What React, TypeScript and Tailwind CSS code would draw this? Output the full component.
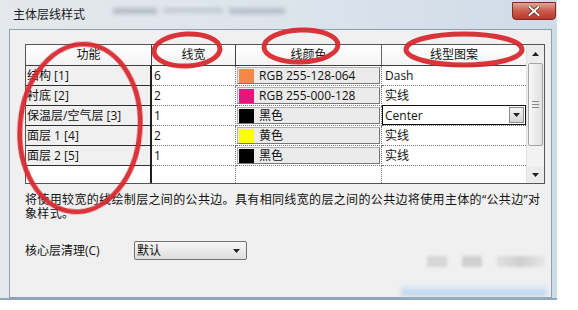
import React from 'react';

const rows = [
  { name: '结构 [1]', w: '6', color: '#f4874a', label: 'RGB 255-128-064', pattern: 'Dash' },
  { name: '衬底 [2]', w: '2', color: '#e6157d', label: 'RGB 255-000-128', pattern: '实线' },
  { name: '保温层/空气层 [3]', w: '1', color: '#000000', label: '黑色', pattern: 'Center', combo: true },
  { name: '面层 1 [4]', w: '2', color: '#ffff00', label: '黄色', pattern: '实线' },
  { name: '面层 2 [5]', w: '1', color: '#000000', label: '黑色', pattern: '实线' },
];

const Tri = ({ down = true }: { down?: boolean }) => (
  <svg width="7" height="4" viewBox="0 0 7 4">
    <path d={down ? 'M0 0 H7 L3.5 4 Z' : 'M0 4 H7 L3.5 0 Z'} fill="#222" />
  </svg>
);

export default function App() {
  return (
    <div className="relative w-[578px] h-[310px] bg-white overflow-hidden text-[12px] text-[#111] font-['Open_Sans','Noto_Sans_CJK_SC',sans-serif]">
      {/* window */}
      <div className="w-[557px] h-[300px] flex flex-col bg-gradient-to-r from-[#e4e8ed] via-[#dde4ec] to-[#cfdbe8] border-b-2 border-[#8ea6c2]">
        {/* title bar */}
        <div className="h-[29px] flex items-start shrink-0">
          <div className="pl-[13px] pt-[7px] text-[12px] leading-[16px] text-[#1a1a1a]">主体层线样式</div>
          <div className="ml-[28px] mt-[8px] flex gap-[6px] blur-[2px] opacity-50">
            <div className="w-[44px] h-[6px] bg-[#8a949e]" />
            <div className="w-[60px] h-[5px] bg-[#a3acb6]" />
            <div className="w-[56px] h-[6px] bg-[#8f99a4]" />
          </div>
          <div className="ml-auto mt-[2px] mr-[1px] w-[44px] h-[18px] rounded-b-[4px] border border-[#7d2a22] bg-gradient-to-b from-[#e8a093] via-[#cc5a4b] to-[#b8382a] flex items-center justify-center">
            <svg width="12" height="10" viewBox="0 0 12 10">
              <path d="M1.5 1 L10.5 9 M10.5 1 L1.5 9" stroke="#5a1f19" strokeWidth="3.4" strokeLinecap="square" />
              <path d="M1.5 1 L10.5 9 M10.5 1 L1.5 9" stroke="#fff" strokeWidth="2" strokeLinecap="square" />
            </svg>
          </div>
        </div>

        {/* panel */}
        <div className="flex-1 ml-[9px] mr-[5px] border border-[#8f9eb0] bg-[#f0f0f0] pl-[15px] pt-[14px] flex flex-col">
          {/* table */}
          <div className="flex w-[520px] h-[140px] border border-[#555] bg-white">
            <div className="w-[500px] flex flex-col">
              <div className="h-[21px] flex border-b border-[#3f3f3f] bg-gradient-to-b from-white to-[#f3f3f3] text-center leading-[20px]">
                <div className="w-[126px] border-r border-[#444]">功能</div>
                <div className="w-[84px] border-r border-[#444]">线宽</div>
                <div className="w-[146px] border-r border-[#666]">线颜色</div>
                <div className="w-[144px]">线型图案</div>
              </div>
              {rows.map((r) => (
                <div key={r.name} className="h-[20px] flex leading-[19px]">
                  <div className="w-[126px] bg-[#f0f0f0] border-b border-[#2e2e2e] border-r-2 border-r-[#1f1f1f] pl-[1px] whitespace-nowrap">
                    {r.name}
                  </div>
                  <div className="w-[84px] border-b border-r border-dotted border-[#777] pl-[2px]">{r.w}</div>
                  <div className="w-[146px] border-b border-r border-dotted border-[#777] p-[1px]">
                    <div className="h-full flex items-center gap-[5px] pl-[1px] bg-[#ebebeb] border border-[#b0b0b0] border-b-[#777] border-r-[#777]">
                      <div className="w-[15px] h-[14px]" style={{ backgroundColor: r.color }} />
                      <span className="leading-[16px] whitespace-nowrap">{r.label}</span>
                    </div>
                  </div>
                  {r.combo ? (
                    <div className="w-[144px] border-b border-dotted border-[#777]">
                      <div className="h-[20px] -mt-[1px] flex items-center border border-[#111] bg-white">
                        <span className="flex-1 pl-[2px]">{r.pattern}</span>
                        <div className="w-[15px] h-[16px] mr-[1px] border border-[#8a8a8a] bg-gradient-to-b from-[#f5f5f5] to-[#d6d6d6] flex items-center justify-center">
                          <Tri />
                        </div>
                      </div>
                    </div>
                  ) : (
                    <div className="w-[144px] border-b border-dotted border-[#777] pl-[3px]">{r.pattern}</div>
                  )}
                </div>
              ))}
              <div className="h-[17px] flex">
                <div className="w-[126px] border-r-2 border-r-[#1f1f1f]" />
                <div className="w-[84px] border-r border-dotted border-[#777]" />
                <div className="w-[146px] border-r border-dotted border-[#777]" />
                <div className="w-[144px]" />
              </div>
            </div>
            {/* scrollbar */}
            <div className="w-[18px] border-l border-[#e2e2e2] bg-[#ececec] flex flex-col">
              <div className="h-[17px] flex items-center justify-center">
                <Tri down={false} />
              </div>
              <div className="mt-[1px] mx-[1px] h-[83px] rounded-[2px] border border-[#a5a5a5] bg-gradient-to-r from-[#f8f8f8] to-[#e0e0e0] flex flex-col items-center justify-center gap-[2px]">
                <div className="w-[7px] h-px bg-[#888]" />
                <div className="w-[7px] h-px bg-[#888]" />
                <div className="w-[7px] h-px bg-[#888]" />
              </div>
              <div className="flex-1 bg-[#f2f2f2]" />
              <div className="h-[17px] flex items-center justify-center">
                <Tri />
              </div>
            </div>
          </div>

          {/* description */}
          <p className="mt-[9px] leading-[14px] tracking-[0.35px] whitespace-nowrap">
            将使用较宽的线绘制层之间的公共边。具有相同线宽的层之间的公共边将使用主体的“公共边”对
            <br />
            象样式。
          </p>

          {/* core cleanup row */}
          <div className="mt-[20px] flex items-start">
            <div className="w-[109px] h-[19px] leading-[19px]">核心层清理(C)</div>
            <div className="w-[113px] h-[19px] flex items-center rounded-[2px] border border-[#707070] bg-gradient-to-b from-[#f6f6f6] to-[#dedede] pl-[2px] pr-[6px]">
              <span className="flex-1 leading-[16px]">默认</span>
              <Tri />
            </div>
            <div className="ml-auto mr-[6px] mt-[15px] flex gap-[15px] blur-[1.5px]">
              <div className="w-[20px] h-[11px] bg-[#d6d6d6]" />
              <div className="w-[20px] h-[11px] bg-[#d0d0d0]" />
              <div className="w-[48px] h-[11px] bg-gradient-to-r from-[#e0e0e0] via-[#cfcfcf] to-[#e6e6e6]" />
            </div>
          </div>

          {/* bottom glow */}
          <div className="mt-auto mb-[1px] ml-auto mr-[4px] w-[146px] h-[11px] blur-[2px] bg-gradient-to-b from-[#e4eef8] to-[#b6cfea]" />
        </div>
      </div>

      {/* red annotation ellipses */}
      <svg className="absolute inset-0 pointer-events-none" width="578" height="310" viewBox="0 0 578 310">
        <g fill="none" stroke="#d8262d" strokeWidth="5" opacity="0.93">
          <ellipse cx="80" cy="128" rx="60" ry="84" transform="rotate(5 80 128)" />
          <ellipse cx="187" cy="50" rx="33" ry="16" transform="rotate(-3 187 50)" />
          <ellipse cx="301" cy="46" rx="37" ry="16" transform="rotate(-2 301 46)" />
          <ellipse cx="464" cy="49.5" rx="58" ry="15.5" />
        </g>
      </svg>
    </div>
  );
}
